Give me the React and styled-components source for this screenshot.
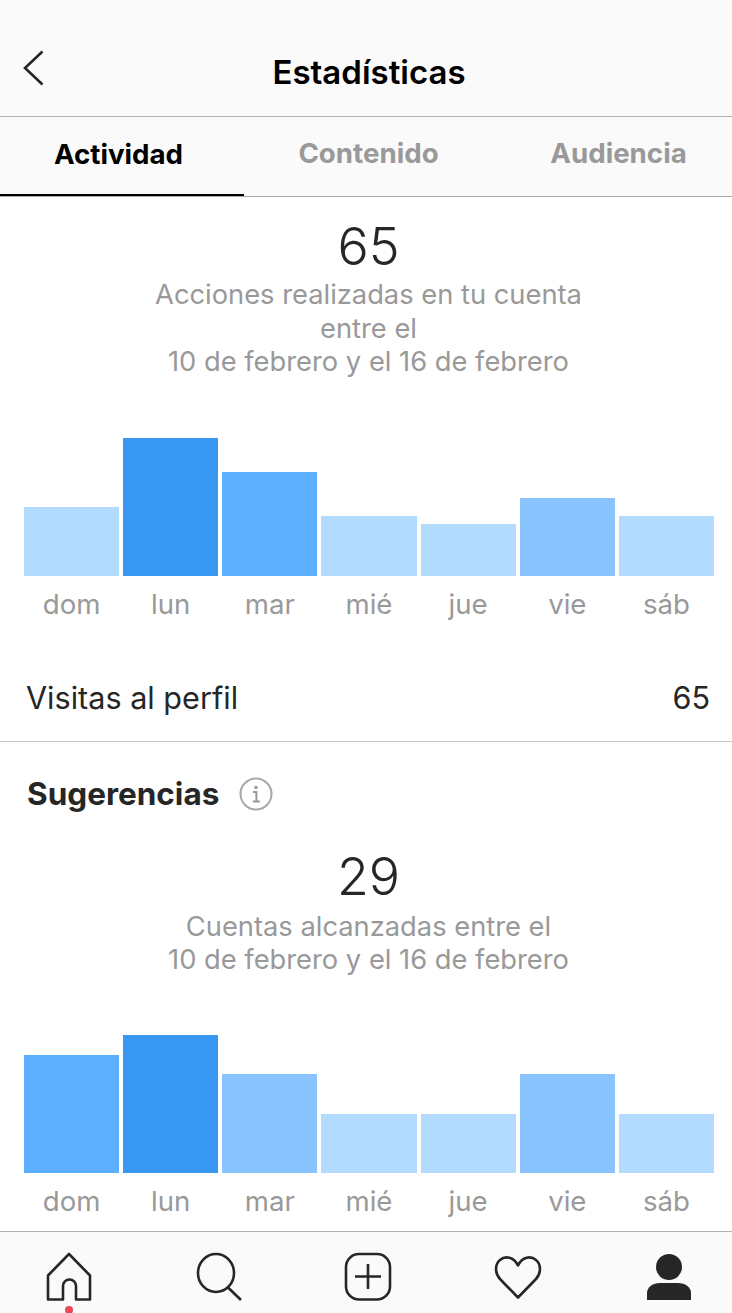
import React from "react";
import styled, { createGlobalStyle } from "styled-components";

const GlobalStyle = createGlobalStyle`
  html, body {
    margin: 0;
    padding: 0;
    background: #fff;
  }
  body {
    font-family: Inter, "Liberation Sans", sans-serif;
    color: #262626;
  }
`;

const Page = styled.div`
  width: 732px;
  height: 1313px;
  display: flex;
  flex-direction: column;
  overflow: hidden;
`;

const Header = styled.header`
  height: 116px;
  background: #fafafa;
  border-bottom: 1px solid #b2b2b2;
  display: flex;
  align-items: center;
  justify-content: center;
  position: relative;
`;

const BackButton = styled.svg`
  position: absolute;
  left: 22px;
  top: 50px;
  width: 23px;
  height: 36px;
`;

const Title = styled.h1`
  margin: 27px 0 0 6px;
  font-size: 33px;
  line-height: 40px;
  font-weight: 600;
  color: #000;
`;

const Tabs = styled.nav`
  height: 79px;
  background: #fafafa;
  border-bottom: 1px solid #a8a8a8;
  display: grid;
  grid-template-columns: repeat(3, 244px);
`;

const Tab = styled.div`
  display: flex;
  align-items: center;
  justify-content: center;
  height: 79px;
  box-sizing: border-box;
  padding-left: ${(p) => p.$pad || 0}px;
  padding-right: ${(p) => (p.$active ? 7 : 0)}px;
  padding-bottom: ${(p) => (p.$active ? 4 : 8)}px;
  border-bottom: ${(p) => (p.$active ? "2px solid #000" : "none")};
  font-size: 27.7px;
  font-weight: 700;
  color: ${(p) => (p.$active ? "#000" : "#999")};
`;

const Content = styled.main`
  flex: 1;
  min-height: 0;
`;

const Summary = styled.section`
  display: flex;
  flex-direction: column;
  align-items: center;
  gap: ${(p) => p.$gap}px;
  padding-top: ${(p) => p.$top}px;
  padding-left: 5px;
`;

const BigNumber = styled.div`
  font-size: 52px;
  line-height: 60px;
  font-weight: 300;
  color: #262626;
`;

const Caption = styled.div`
  font-size: 27.3px;
  line-height: 33.5px;
  font-weight: 400;
  color: #999;
  text-align: center;
`;

const Chart = styled.div`
  display: grid;
  grid-template-columns: repeat(7, 1fr);
  column-gap: 4px;
  padding: 0 18px 0 24px;
  margin-top: ${(p) => p.$top}px;
`;

const Plot = styled.div`
  display: flex;
  flex-direction: column;
  justify-content: flex-end;
  height: 138px;
`;

const Bar = styled.div`
  background: ${(p) => p.$color};
`;

const DayLabel = styled.div`
  height: 50px;
  display: flex;
  align-items: center;
  justify-content: center;
  padding-top: 7px;
  box-sizing: border-box;
  font-size: 27.6px;
  color: #999;
`;

const StatRow = styled.div`
  height: 87px;
  margin-top: 28px;
  padding: 0 22px 0 26px;
  display: flex;
  align-items: center;
  justify-content: space-between;
  border-bottom: 1px solid #c7c7c7;
  font-size: 30.6px;
  color: #262626;
`;

const SectionTitle = styled.div`
  display: flex;
  align-items: center;
  gap: 20px;
  padding: 32px 27px 0;
  height: 40px;
  font-size: 31.5px;
  font-weight: 700;
  color: #262626;
`;

const BottomNav = styled.footer`
  height: 81px;
  background: #fafafa;
  border-top: 1px solid #b2b2b2;
  display: flex;
  justify-content: space-between;
  padding: 0 41px 0 45px;
`;

const NavItem = styled.div`
  position: relative;
  width: 48px;
  height: 81px;
`;

const NavIcon = styled.svg`
  display: block;
  width: 48px;
  height: 50px;
  margin-top: 20px;
  fill: ${(p) => (p.$solid ? "#262626" : "none")};
  stroke: ${(p) => (p.$solid ? "none" : "#262626")};
  stroke-width: 2.6;
`;

const Dot = styled.span`
  position: absolute;
  left: 20px;
  top: 74px;
  width: 8px;
  height: 8px;
  border-radius: 50%;
  background: #ed4956;
`;

const weekDays = ["dom", "lun", "mar", "mié", "jue", "vie", "sáb"];

const shades = {
  light: "#b3dbff",
  soft: "#8ac4ff",
  mid: "#5cafff",
  strong: "#3897f0",
};

const actionBars = [
  [69, "light"],
  [138, "strong"],
  [104, "mid"],
  [60, "light"],
  [52, "light"],
  [78, "soft"],
  [60, "light"],
];

const reachBars = [
  [118, "mid"],
  [138, "strong"],
  [99, "soft"],
  [59, "light"],
  [59, "light"],
  [99, "soft"],
  [59, "light"],
];

function WeekChart({ data, top }) {
  return (
    <Chart $top={top}>
      {data.map(([height, shade], i) => (
        <div key={weekDays[i]}>
          <Plot>
            <Bar $color={shades[shade]} style={{ height }} />
          </Plot>
          <DayLabel>{weekDays[i]}</DayLabel>
        </div>
      ))}
    </Chart>
  );
}

export default function App() {
  return (
    <Page>
      <GlobalStyle />
      <Header>
        <BackButton viewBox="0 0 23 36" fill="none" stroke="#262626" strokeWidth="2.6">
          <path d="M20.5 1.500 3 18l17.500 16.500" />
        </BackButton>
        <Title>Estadísticas</Title>
      </Header>
      <Tabs>
        <Tab $active>Actividad</Tab>
        <Tab $pad={5}>Contenido</Tab>
        <Tab $pad={17}>Audiencia</Tab>
      </Tabs>
      <Content>
        <Summary $top={20} $gap={1}>
          <BigNumber>65</BigNumber>
          <Caption>
            Acciones realizadas en tu cuenta
            <br />
            entre el
            <br />
            10 de febrero y el 16 de febrero
          </Caption>
        </Summary>
        <WeekChart data={actionBars} top={59} />
        <StatRow>
          <span>Visitas al perfil</span>
          <span>65</span>
        </StatRow>
        <SectionTitle>
          Sugerencias
          <svg width="34" height="34" viewBox="0 0 34 34" fill="none">
            <circle cx="17" cy="17" r="15.500" stroke="#a8a8a8" strokeWidth="2" />
            <circle cx="17" cy="10.500" r="1.800" fill="#999" />
            <path d="M14 15h3.400v9M13.800 24.400h7" stroke="#999" strokeWidth="2" />
          </svg>
        </SectionTitle>
        <Summary $top={33} $gap={3}>
          <BigNumber>29</BigNumber>
          <Caption>
            Cuentas alcanzadas entre el
            <br />
            10 de febrero y el 16 de febrero
          </Caption>
        </Summary>
        <WeekChart data={reachBars} top={58} />
      </Content>
      <BottomNav>
        <NavItem>
          <NavIcon viewBox="0 0 48 50">
            <path d="M3 23.500 24 2l21 21.500V47.500H31V34a6.500 6.500 0 0 0-13 0v13.500H3z" strokeLinejoin="round" />
          </NavIcon>
          <Dot />
        </NavItem>
        <NavItem>
          <NavIcon viewBox="0 0 48 50">
            <ellipse cx="21" cy="21" rx="18" ry="19" />
            <path d="M33 35.500 46 48" />
          </NavIcon>
        </NavItem>
        <NavItem>
          <NavIcon viewBox="0 0 48 50">
            <rect x="2" y="2" width="44" height="45.500" rx="13" />
            <path d="M24 12v25M11 24.500h26" />
          </NavIcon>
        </NavItem>
        <NavItem>
          <NavIcon viewBox="0 0 48 50">
            <path d="M24 45.500 6 27C.5 21 1 12 6 8c5-4.500 14-3.500 18 5.500C28 4.500 37 3.500 42 8c5 4 5.500 13 0 19z" strokeLinejoin="round" />
          </NavIcon>
        </NavItem>
        <NavItem>
          <NavIcon viewBox="0 0 48 50" $solid>
            <ellipse cx="26" cy="15" rx="13" ry="13" />
            <path d="M4 48v-7C4 35 10 31 17 31h18c7 0 13 4 13 10v7z" />
          </NavIcon>
        </NavItem>
      </BottomNav>
    </Page>
  );
}
